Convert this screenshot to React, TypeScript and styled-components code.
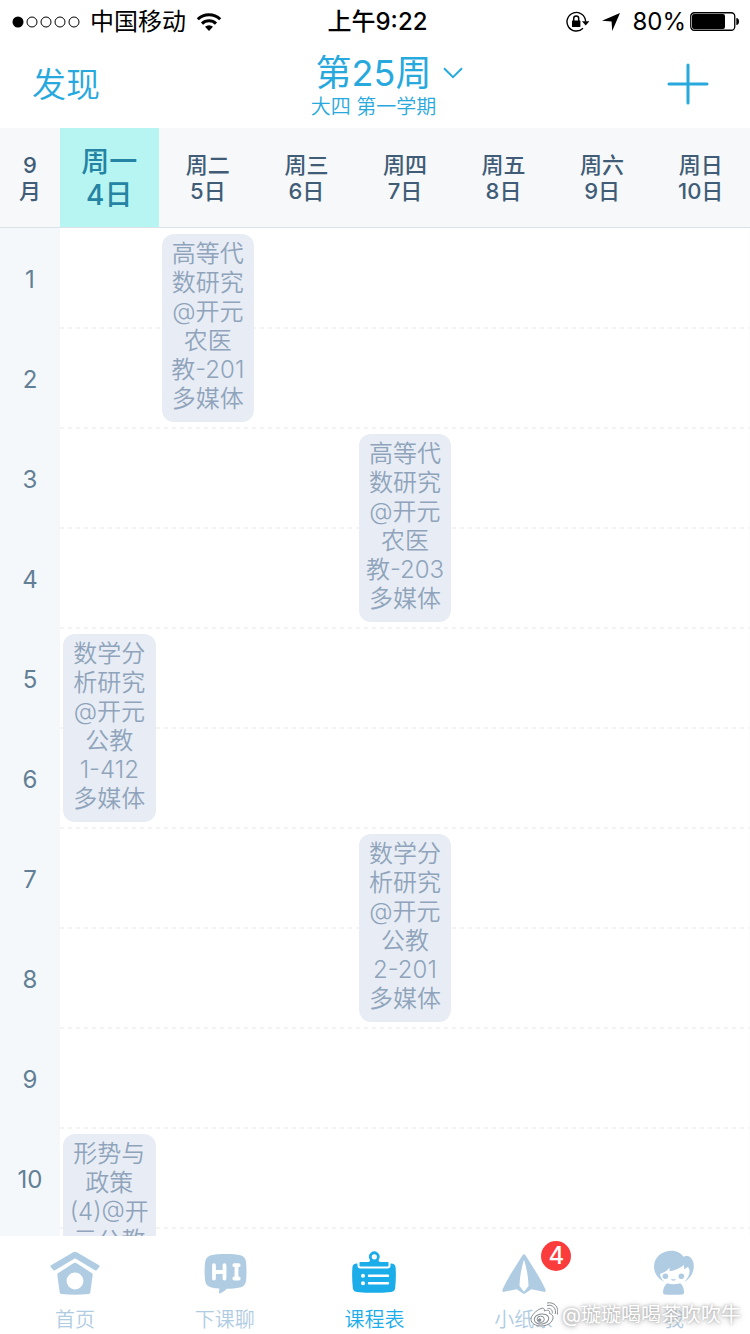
import React from "react";
import styled, { createGlobalStyle, css } from "styled-components";

const latin = `Inter, "Noto Sans CJK SC", sans-serif`;

const GlobalStyle = createGlobalStyle`
  *, *::before, *::after { box-sizing: border-box; }
  body { margin: 0; background: #fff; font-family: ${latin}; }
  button { border: 0; padding: 0; background: none; font: inherit; color: inherit; cursor: pointer; }
  a { color: inherit; text-decoration: none; }
`;

const Screen = styled.div`
  position: relative;
  display: flex;
  flex-direction: column;
  height: 100vh;
  overflow: hidden;
`;

const StatusBar = styled.div`
  display: grid;
  grid-template-columns: 1fr auto 1fr;
  align-items: center;
  height: 42px;
  padding: 2px 11px 0 12px;
  font-size: 24px;
  line-height: 40px;
  color: #000;
`;

const StatusGroup = styled.div<{ $end?: boolean }>`
  display: flex;
  align-items: center;
  justify-content: ${(p) => (p.$end ? "flex-end" : "flex-start")};
  gap: ${(p) => (p.$end ? 4 : 10)}px;
`;

const Clock = styled.time`
  padding-left: 4px;
  font-weight: 500;
`;

const StatusIcons = styled.span`
  display: flex;
  align-items: center;
  gap: 12px;
  margin-right: 8px;
`;

const NavBar = styled.header`
  display: grid;
  grid-template-columns: 1fr auto 1fr;
  align-items: center;
  height: 86px;
  padding: 0 41px 2px 32px;
  color: #27a9de;
`;

const NavLink = styled.a`
  justify-self: start;
  padding-top: 2px;
  font-size: 34px;
  font-weight: 350;
  line-height: 40px;
`;

const AddButton = styled.button`
  justify-self: end;
  display: flex;
`;

const WeekButton = styled.button`
  display: flex;
  flex-direction: column;
  align-items: center;
  padding: 6px 0 0 6px;
`;

const WeekTitle = styled.span`
  display: flex;
  align-items: center;
  gap: 12px;
  padding-left: 32px;
  font-size: 36px;
  line-height: 40px;
`;

const Term = styled.span`
  font-size: 20px;
  font-weight: 350;
  line-height: 28px;
`;

const Scroller = styled.main`
  flex: 1;
  min-height: 0;
  overflow: hidden auto;
  scrollbar-width: none;
`;

const Timetable = styled.table`
  width: 100%;
  table-layout: fixed;
  border-collapse: separate;
  border-spacing: 0;
  text-align: center;
`;

const Body = styled.tbody`
  background-image:
    linear-gradient(#fff, #fff),
    linear-gradient(transparent 1px, #fff 1px 99px, transparent 99px),
    repeating-linear-gradient(90deg, transparent 0 4px, #f3f3f3 4px 8px);
  background-size: 100% 2px, 100% 100px, 100% 100%;
  background-repeat: no-repeat, repeat, repeat;
`;

const headCell = css`
  height: 100px;
  padding: 0;
  border-bottom: 1px solid #d9e3e8;
`;

const Month = styled.th`
  ${headCell}
  width: 60px;
  background: #f6f8fa;
  color: #405c76;
  font-size: 22px;
  font-weight: 500;
  line-height: 26px;
`;

const Day = styled.th<{ $today?: boolean }>`
  ${headCell}
  padding-top: ${(p) => (p.$today ? 2 : 0)}px;
  background: ${(p) => (p.$today ? "#b6f5f1" : "#f6f8fa")};
  color: ${(p) => (p.$today ? "#2583a3" : "#405c76")};
  font-size: ${(p) => (p.$today ? 28 : 22)}px;
  font-weight: 500;
  line-height: ${(p) => (p.$today ? 33 : 26)}px;
`;

const Line = styled.span`
  display: block;
  white-space: nowrap;
`;

const Period = styled.th`
  height: 100px;
  padding: 2px 0 0;
  background: #f4f8fa;
  color: #627f96;
  font-size: 24px;
  font-weight: 400;
`;

const Slot = styled.td`
  padding: 6px 3px;
  vertical-align: top;
`;

const Course = styled.button`
  display: flex;
  flex-direction: column;
  align-items: center;
  justify-content: flex-start;
  width: 100%;
  min-height: 188px;
  padding: 5px 0 9px;
  border-radius: 12px;
  background: #e8edf5;
  color: #8fa4bb;
  font-size: 24px;
  font-weight: 350;
  line-height: 29px;
`;

const TabBar = styled.nav`
  display: grid;
  grid-template-columns: repeat(5, 1fr);
  height: 98px;
  padding-right: 1px;
  background: #fff;
`;

const Tab = styled.a<{ $active?: boolean }>`
  display: flex;
  flex-direction: column;
  align-items: center;
  padding-top: 12px;
  gap: 12px;
  font-size: 20px;
  font-weight: 350;
  line-height: 24px;
  color: ${(p) => (p.$active ? "#1badea" : "#b0cce3")};
`;

const TabIcon = styled.span`
  position: relative;
  display: flex;
`;

const Badge = styled.span`
  position: absolute;
  top: -7px;
  left: 40px;
  width: 30px;
  height: 30px;
  border-radius: 50%;
  background: #fb3c3c;
  color: #fff;
  font-size: 24px;
  font-weight: 500;
  line-height: 30px;
  text-align: center;
`;

const Watermark = styled.div`
  position: absolute;
  right: 9px;
  bottom: 5px;
  display: flex;
  align-items: center;
  gap: 4px;
  color: #fff;
  font-size: 20px;
  line-height: 28px;
  text-shadow: 0 0 3px #a4a4a4, 0 1px 6px #b0b0b0;
  pointer-events: none;
`;

const SignalIcon = () => (
  <svg width="68" height="12" viewBox="0 0 68 12" aria-hidden="true">
    <circle cx="6" cy="6" r="5.5" />
    {[20, 34, 48, 62].map((x) => (
      <circle key={x} cx={x} cy="6" r="5" fill="none" stroke="#000" strokeWidth="1" />
    ))}
  </svg>
);

const WifiIcon = () => (
  <svg width="26" height="20" viewBox="0 0 26 20" fill="none" stroke="#000" strokeWidth="3" aria-hidden="true">
    <path d="M1.8 7.2a16 16 0 0 1 22.4 0" />
    <path d="M6 11.6a10 10 0 0 1 14 0" />
    <path d="M13 19l-4-4.2a5.8 5.8 0 0 1 8 0z" fill="#000" stroke="none" />
  </svg>
);

const RotationLockIcon = () => (
  <svg width="24" height="22" viewBox="0 0 24 22" fill="none" stroke="#000" aria-hidden="true">
    <path d="M19.6 10.5A9.3 9.3 0 1 0 17 17.2" strokeWidth="1.4" />
    <path d="M16 10.2h7.4l-3.7 4.2z" fill="#000" stroke="none" />
    <rect x="6" y="9.4" width="8.4" height="6.6" rx="0.6" fill="#000" stroke="none" />
    <path d="M7.7 10V7.4a2.5 2.5 0 0 1 5 0V10" strokeWidth="1.5" />
  </svg>
);

const LocationIcon = () => (
  <svg width="18" height="18" viewBox="0 0 18 18" aria-hidden="true">
    <path d="M18 0L10.2 18 9.6 8.4 0 7.8z" />
  </svg>
);

const BatteryIcon = () => (
  <svg width="49" height="20" viewBox="0 0 49 20" aria-hidden="true">
    <rect x="0.75" y="0.75" width="44" height="17.5" rx="3.5" fill="none" stroke="#000" strokeWidth="1.3" />
    <rect x="2" y="2" width="33" height="15" rx="2" />
    <path d="M46.3 6c1.8 0 2.7 1.4 2.7 3.5s-.9 3.5-2.7 3.5z" />
  </svg>
);

const ChevronIcon = () => (
  <svg width="20" height="12" viewBox="0 0 20 12" fill="none" stroke="currentColor" strokeWidth="2" aria-hidden="true">
    <path d="M1 1.2l9 9 9-9" />
  </svg>
);

const PlusIcon = () => (
  <svg width="42" height="42" viewBox="0 0 42 42" fill="none" stroke="currentColor" strokeWidth="3" strokeLinecap="round" aria-hidden="true">
    <path d="M21 2v38M2 21h38" />
  </svg>
);

const HomeIcon = () => (
  <svg width="50" height="48" viewBox="0 0 50 48" aria-hidden="true">
    <path
      fill="currentColor"
      d="M23.2 4.300q1.800-1.200 3.600 0L49 17.200q1 .8.300 1.800L46.800 22q-.8 1-1.900.3L25 10.200 5.100 22.300q-1.100.7-1.900-.3L.7 19q-.7-1 .3-1.800z"
    />
    <path
      fill="currentColor"
      fillRule="evenodd"
      d="M23.400 15.200q1.600-1 3.200 0L42 25.200q.8.600.7 1.600L40.300 44.500q-.2 1.400-1.500 1.500Q25 47.600 11.200 46q-1.300-.1-1.500-1.500L7.300 26.800q-.1-1 .7-1.600zM25 24.600a8.400 8.400 0 1 0 0 16.800 8.400 8.400 0 0 0 0-16.800z"
    />
  </svg>
);

const ChatIcon = () => (
  <svg width="46" height="48" viewBox="0 0 46 48" aria-hidden="true">
    <path
      fill="currentColor"
      d="M23.500 6c7 0 11.500.3 15 1.200 3.600 1 5.200 3.200 5.600 7 .5 5.500.5 13 0 18.200-.5 4-2.600 6.200-6.200 7-3.700.9-8.500 1.300-13.300 1.400-1.700 2-3.600 3.400-6 4.500-1.200.5-1.800 0-1.600-1.200l.3-3.500c-3-.2-5.500-.6-7.900-1.200-3.700-.9-5.700-3-6.300-7-.7-5.400-.7-12.800 0-18.200.5-3.700 2.400-6 6-7C12.500 6.300 16.500 6 23.500 6z"
    />
    <path
      fill="none"
      stroke="#fff"
      strokeWidth="3.800"
      strokeLinecap="round"
      strokeLinejoin="round"
      d="M12 17.200v13.300M22.500 17.200v13.300M12 24h10.500M32.300 17.200h4.400M34.500 17.200v13.300M32.300 30.500h4.400"
    />
  </svg>
);

const ScheduleIcon = () => (
  <svg width="44" height="48" viewBox="0 0 44 48" aria-hidden="true">
    <path
      fill="currentColor"
      d="M5 15.400H39c3 0 4.400 1.400 4.600 4.200.5 6.500.3 13.500-.4 20.200-.3 2.500-1.500 3.800-4 4.100-11.400 1.200-23 1.200-34.400 0-2.500-.3-3.700-1.600-4-4.100-.7-6.700-.9-13.700-.4-20.200.2-2.800 1.600-4.200 4.600-4.200z"
    />
    <path
      fill="currentColor"
      stroke="#fff"
      strokeWidth="2"
      d="M7.500 13h8.600q1.200 0 .8-1a6.300 6.300 0 1 1 10.800 0q-.4 1 .8 1h8l1 1.200v3.600q0 1.600-2 1.600h-27q-2 0-2-1.600v-3.600z"
    />
    <circle cx="22.300" cy="8.800" r="2.600" fill="#fff" />
    <path fill="none" stroke="#fff" strokeWidth="2.400" strokeLinecap="round" d="M17 27.700h19M17 35.300h19" />
    <circle cx="11" cy="27.700" r="2" fill="#fff" />
    <circle cx="11" cy="35.300" r="2" fill="#fff" />
  </svg>
);

const PlaneIcon = () => (
  <svg width="46" height="48" viewBox="0 0 46 48" aria-hidden="true">
    <path
      fill="currentColor"
      d="M23 6.500c1 0 1.500.6 2 1.500 6.500 10.500 14 21.500 19.500 33.500.6 1.800-.2 2.700-1.800 2.300l-12.500-2.600-6.200 4.300c-.6.400-1.400.4-2 0L15.800 41.200 3.300 43.800c-1.600.4-2.400-.5-1.800-2.300C7 29.500 14.500 18.500 21 8c.5-.9 1-1.500 2-1.500z"
    />
    <path fill="#fff" d="M23 11.500c2.600 8.500 4.200 17 4.500 26.500L23 43.800 18.500 38c.3-9.500 1.900-18 4.500-26.500z" />
  </svg>
);

const AvatarIcon = () => (
  <svg width="42" height="48" viewBox="0 0 42 48" fill="currentColor" aria-hidden="true">
    <path d="M11.500 34C4 30 1 24.500 1 18.500 1 9 9 2.700 18.700 2.700c5.300 0 9.300 2.300 11.800 6.100 1.500-1 4.500-1.200 7 .7 3 2.500 3.800 7.500 3 11.500-.7 5.500-4 10-9.500 13 4-3.500 5.800-7.500 5.500-12L35 18.700q-2 1.800-4 2.300V17q-6 5-14.500 6.300v-3.800Q13 24.500 7 26q.5 4.500 4.500 8z" />
    <circle cx="12.400" cy="28.300" r="2.800" />
    <circle cx="28.300" cy="28.300" r="2.800" />
    <path fill="none" stroke="currentColor" strokeWidth="1.200" strokeLinecap="round" d="M18.800 31.500q1.600 1.200 3.200 0" />
    <path d="M14 35.300q6.700 2 13.400 0c2.400 2 3.400 5 3.700 8.700q.1 2.300-1.600 2.500-9 .6-18 0Q9.800 46.300 10 44c.3-3.700 1.600-6.700 4-8.700z" />
  </svg>
);

const WeiboIcon = () => (
  <svg width="28" height="26" viewBox="0 0 28 26" fill="#fff" stroke="#858b90" strokeWidth="1" aria-hidden="true">
    <path d="M11 6.500c2-.8 3.800-.3 3.400 2.500 3-1.300 6-.9 5 2.500 3 .8 4.300 3 3.300 5.700C21.500 21.500 16.500 24 11 24 5.500 24 1 21.300 1 17.300 1 13.500 6 8.500 11 6.500z" />
    <ellipse cx="11.500" cy="17" rx="7.300" ry="5" transform="rotate(-8 11.500 17)" />
    <ellipse cx="10.700" cy="17.300" rx="3.600" ry="3.200" />
    <circle cx="9.700" cy="18" r="1.200" fill="#858b90" />
    <path fill="none" d="M17.500 6.500c3-.7 5.500 1.800 4.700 5M17 3.500c5.500-1.500 9.700 3 8.200 8.500M17 1c7.500-1.600 12.300 4.500 10.300 11.500" />
  </svg>
);

const days = [
  ["周一", "4日"],
  ["周二", "5日"],
  ["周三", "6日"],
  ["周四", "7日"],
  ["周五", "8日"],
  ["周六", "9日"],
  ["周日", "10日"],
];

type CourseEntry = { day: number; start: number; lines: string[] };

const courses: CourseEntry[] = [
  { day: 1, start: 1, lines: ["高等代", "数研究", "@开元", "农医", "教-201", "多媒体"] },
  { day: 3, start: 3, lines: ["高等代", "数研究", "@开元", "农医", "教-203", "多媒体"] },
  { day: 0, start: 5, lines: ["数学分", "析研究", "@开元", "公教", "1-412", "多媒体"] },
  { day: 3, start: 7, lines: ["数学分", "析研究", "@开元", "公教", "2-201", "多媒体"] },
  { day: 0, start: 10, lines: ["形势与", "政策", "(4)@开", "元公教"] },
];

const periods = Array.from({ length: 11 }, (_, i) => i + 1);

const tabs = [
  { label: "首页", Icon: HomeIcon },
  { label: "下课聊", Icon: ChatIcon },
  { label: "课程表", Icon: ScheduleIcon, active: true },
  { label: "小纸条", Icon: PlaneIcon, badge: 4 },
  { label: "我", Icon: AvatarIcon },
];

const Lines = ({ items }: { items: string[] }) => (
  <>
    {items.map((text) => (
      <Line key={text}>{text}</Line>
    ))}
  </>
);

function renderSlot(day: number, period: number) {
  const course = courses.find((c) => c.day === day && (c.start === period || c.start + 1 === period));
  if (!course) return <Slot key={day} />;
  if (course.start !== period) return null;
  return (
    <Slot key={day} rowSpan={2}>
      <Course type="button">
        <Lines items={course.lines} />
      </Course>
    </Slot>
  );
}

export default function App() {
  return (
    <Screen>
      <GlobalStyle />
      <StatusBar>
        <StatusGroup>
          <SignalIcon />
          <span>中国移动</span>
          <WifiIcon />
        </StatusGroup>
        <Clock>上午9:22</Clock>
        <StatusGroup $end>
          <StatusIcons>
            <RotationLockIcon />
            <LocationIcon />
          </StatusIcons>
          <span>80%</span>
          <BatteryIcon />
        </StatusGroup>
      </StatusBar>

      <NavBar>
        <NavLink href="#discover">发现</NavLink>
        <WeekButton type="button">
          <WeekTitle>
            第25周
            <ChevronIcon />
          </WeekTitle>
          <Term>大四 第一学期</Term>
        </WeekButton>
        <AddButton type="button" aria-label="添加">
          <PlusIcon />
        </AddButton>
      </NavBar>

      <Scroller>
        <Timetable>
          <thead>
            <tr>
              <Month scope="col">
                <Lines items={["9", "月"]} />
              </Month>
              {days.map((day, i) => (
                <Day key={day[0]} scope="col" $today={i === 0}>
                  <Lines items={day} />
                </Day>
              ))}
            </tr>
          </thead>
          <Body>
            {periods.map((period) => (
              <tr key={period}>
                <Period scope="row">{period}</Period>
                {days.map((_, day) => renderSlot(day, period))}
              </tr>
            ))}
          </Body>
        </Timetable>
      </Scroller>

      <TabBar>
        {tabs.map(({ label, Icon, active, badge }) => (
          <Tab key={label} href={`#${label}`} $active={active} aria-current={active ? "page" : undefined}>
            <TabIcon>
              <Icon />
              {badge && <Badge>{badge}</Badge>}
            </TabIcon>
            <span>{label}</span>
          </Tab>
        ))}
      </TabBar>

      <Watermark>
        <WeiboIcon />
        <span>@璇璇喝喝茶吹吹牛</span>
      </Watermark>
    </Screen>
  );
}
